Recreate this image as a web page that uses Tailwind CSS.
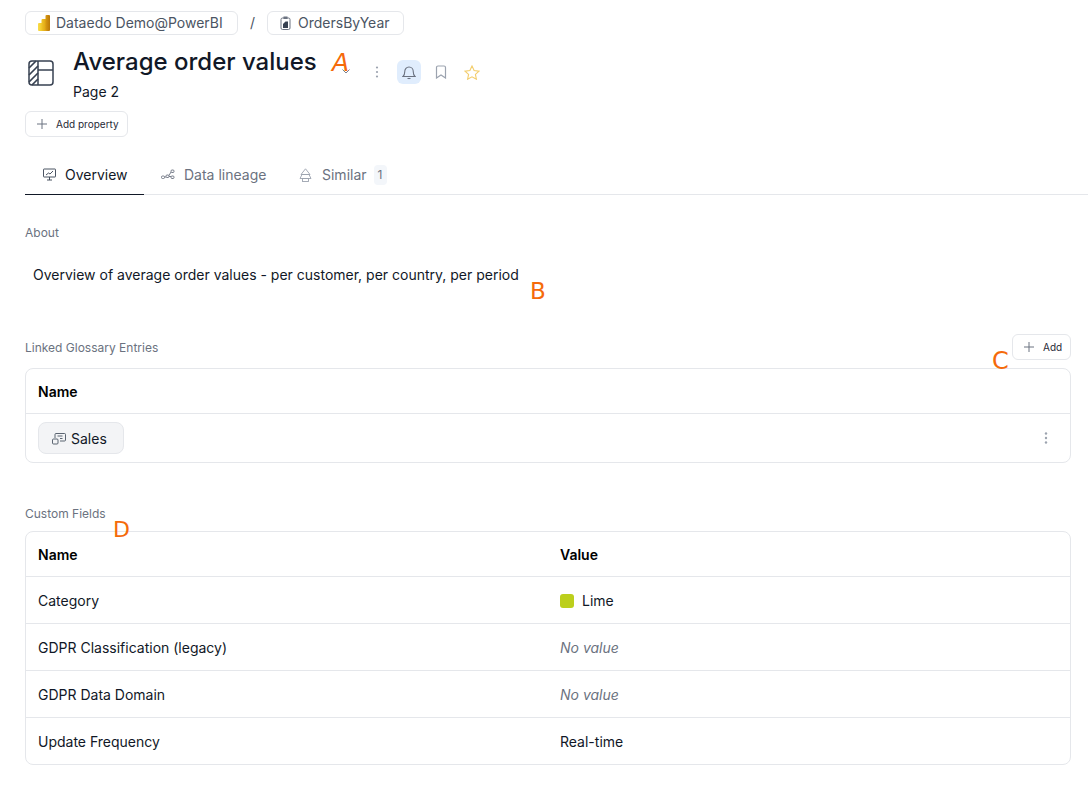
<!DOCTYPE html>
<html lang="en">
<head>
    <meta charset="UTF-8">
    <title>Average order values</title>
    <script src="https://cdn.jsdelivr.net/npm/@tailwindcss/browser@4"></script>
</head>
<body class="bg-white font-['Inter',sans-serif] text-[#111827] h-[798px] overflow-hidden relative">

    <!-- breadcrumb -->
    <div class="flex items-center pt-[11px] pl-[25px] h-[35px]">
        <div class="flex items-center h-6 w-[213px] pl-3 border border-[#e5e7eb] rounded-md text-sm text-[#4b5563]">
            <svg class="w-[12px] h-[16px] mr-[6px]" viewBox="0 0 12 16">
                <defs>
                    <linearGradient id="bi1" x1="0" y1="0" x2="1" y2="0"><stop offset="0" stop-color="#f8dc4a"/><stop offset="1" stop-color="#f2c21f"/></linearGradient>
                    <linearGradient id="bi2" x1="0" y1="0" x2="1" y2="0"><stop offset="0" stop-color="#f0c52a"/><stop offset="1" stop-color="#dc9f10"/></linearGradient>
                    <linearGradient id="bi3" x1="0" y1="0" x2="1" y2="0"><stop offset="0" stop-color="#d99a12"/><stop offset="1" stop-color="#b97708"/></linearGradient>
                </defs>
                <rect x="0" y="8" width="5" height="8" rx="1" fill="url(#bi1)"/><rect x="3.500" y="4" width="5" height="12" rx="1" fill="url(#bi2)"/><rect x="7.500" y="0" width="4.500" height="16" rx="1" fill="url(#bi3)"/>
            </svg>
            Dataedo Demo@PowerBI
        </div>
        <span class="w-[29px] text-center text-sm text-[#4b5563]">/</span>
        <div class="flex items-center h-6 w-[137px] pl-3 border border-[#e5e7eb] rounded-md text-sm text-[#4b5563]">
            <svg class="w-[11px] h-[14px] mr-[7px]" viewBox="0 0 11 14"><rect x="1" y="2" width="9" height="11.500" rx="1.500" fill="none" stroke="#6b7280"/><rect x="3.500" y="0.500" width="4" height="2.500" fill="#6b7280"/><path d="M3 12V8l2.500-2.500h2.500V12z" fill="#374151"/></svg>
            OrdersByYear
        </div>
    </div>

    <!-- title -->
    <div class="flex pl-[28px] mt-[10px] h-[67px]">
        <svg class="w-[26px] h-[26px] mt-[15px]" viewBox="0 0 26 26" fill="none" stroke="#374151" stroke-width="1.500">
            <rect x="1" y="1" width="24" height="24" rx="3"/>
            <path d="M10 1v24M10 10h15"/>
            <path d="M1 8l7-7M1 15L10 6M1 22L10 13M4 25l6-6" stroke-width="1.700"/>
        </svg>
        <div class="ml-[19px]">
            <div class="text-2xl font-medium leading-8 h-[32px] mt-[1px]">Average order values</div>
            <div class="text-sm leading-5 mt-[4px]">Page 2</div>
        </div>
        <div class="flex items-center h-6 mt-[15px] ml-[48px]">
            <svg class="w-6 h-6" viewBox="0 0 24 24" fill="#9ca3af"><circle cx="12" cy="7.500" r="1.100"/><circle cx="12" cy="12" r="1.100"/><circle cx="12" cy="16.500" r="1.100"/></svg>
            <div class="flex items-center justify-center w-6 h-6 ml-2 rounded-md bg-[#e0edfd]">
                <svg class="w-[14px] h-[15px]" viewBox="0 0 14 15" fill="none" stroke="#6b7280" stroke-width="1.100"><path d="M1 11.500c1.300-1 1.700-2.200 1.700-4.500 0-2.800 1.800-5 4.300-5s4.300 2.200 4.300 5c0 2.300.4 3.500 1.700 4.500z"/><path d="M5.500 13.500h3"/></svg>
            </div>
            <svg class="w-[12px] h-[14px] ml-[14px]" viewBox="0 0 12 14" fill="none" stroke="#9ca3af" stroke-width="1.200"><path d="M1.500 13V2.500a1.500 1.500 0 0 1 1.500-1.500h6a1.500 1.500 0 0 1 1.500 1.500V13L6 10z"/></svg>
            <svg class="w-[16px] h-[15px] ml-[17px]" viewBox="0 0 16 15" fill="none" stroke="#f3cd6b" stroke-width="1.100"><path d="M8 1l2.100 4.500 4.900.6-3.600 3.300 1 4.800L8 11.800l-4.400 2.400 1-4.800L1 6.100l4.900-.6z"/></svg>
        </div>
    </div>

    <!-- add property -->
    <div class="pl-[25px] mt-[-1px]">
        <div class="inline-flex items-center w-[103px] h-[26px] pl-[10px] border border-[#e5e7eb] rounded-md text-[10px] text-[#1f2937]">
            <svg class="w-3 h-3 mr-2" viewBox="0 0 12 12" stroke="#6b7280" stroke-width="1"><path d="M6 1v10M1 6h10"/></svg>
            Add property
        </div>
    </div>

    <!-- tabs -->
    <div class="flex mt-[18px] ml-[25px] h-[40px] border-b border-[#e5e7eb] text-sm">
        <div class="flex items-center w-[119px] pl-[18px] h-[40px] border-b-[1.500px] border-[#111827]">
            <svg class="w-[13px] h-[13px] mr-[9px]" viewBox="0 0 13 13" fill="none" stroke="#374151" stroke-width="0.900"><rect x="0.500" y="1" width="12" height="8" rx="0.500"/><path d="M6.500 9v3M4 12h5M3 7l2.500-2 1.500 1 3-3"/></svg>
            Overview
        </div>
        <div class="flex items-center w-[155px] pl-[17px] text-[#6b7280]">
            <svg class="w-[14px] h-[11px] mr-[9px]" viewBox="0 0 14 11" fill="none" stroke="#6b7280" stroke-width="0.900"><rect x="0.500" y="7" width="3" height="2.500" rx="1"/><rect x="5" y="6" width="3" height="2.500" rx="1"/><rect x="10" y="1" width="3" height="2.500" rx="1"/><rect x="10" y="7" width="3" height="2.500" rx="1"/><path d="M3.500 8H5M8 7.500h2M8 6.500L10 3"/></svg>
            Data lineage
        </div>
        <div class="flex items-center text-[#6b7280]">
            <svg class="w-[13px] h-[14px] mr-[10px]" viewBox="0 0 13 14" fill="none" stroke="#9ca3af" stroke-width="0.900"><path d="M6.500 .8L11 6.500H2zM1 10.500L3 6.500h7l2 4z"/><rect x="3.500" y="10.500" width="6" height="3"/></svg>
            Similar
            <span class="flex items-center justify-center w-[13px] h-5 ml-[7px] rounded bg-[#f3f6fa] text-xs">1</span>
        </div>
    </div>

    <!-- about -->
    <section class="px-[25px]">
        <div class="text-xs leading-4 text-[#6b7280] mt-[30px]">About</div>
        <p class="text-sm leading-5 pl-2 mt-[24px]">Overview of average order values - per customer, per country, per period</p>
    </section>

    <!-- linked glossary -->
    <section class="pl-[25px] pr-[17px]">
        <div class="flex items-center justify-between h-[26px] mt-[49px]">
            <span class="text-xs text-[#6b7280] mt-[1px]">Linked Glossary Entries</span>
            <div class="flex items-center w-[59px] h-[26px] pl-[10px] border border-[#e5e7eb] rounded-md text-[10px] text-[#1f2937]">
                <svg class="w-3 h-3 mr-2" viewBox="0 0 12 12" stroke="#6b7280" stroke-width="1"><path d="M6 1v10M1 6h10"/></svg>
                Add
            </div>
        </div>
        <div class="mt-2 border border-[#e5e7eb] rounded-lg text-sm">
            <div class="flex items-center h-[45px] px-3 pt-px font-semibold text-black border-b border-[#e5e7eb]">Name</div>
            <div class="flex items-center justify-between h-[48px] pl-3 pr-[18px]">
                <div class="flex items-center w-[86px] h-8 pl-[13px] pt-px bg-[#f3f4f6] border border-[#e5e7eb] rounded-lg">
                    <svg class="w-[14px] h-[12px] mr-[5px]" viewBox="0 0 14 12" fill="none" stroke="#4b5563" stroke-width="0.900"><path d="M3 5V1.500A1 1 0 0 1 4 .500h8.500a1 1 0 0 1 1 1V7a1 1 0 0 1-1 1H8M5.500 3h5M8 5.500h2.500"/><rect x="0.500" y="6" width="5.500" height="5" rx="1"/></svg>
                    Sales
                </div>
                <svg class="w-3 h-4" viewBox="0 0 12 16" fill="#9ca3af"><circle cx="6" cy="3.500" r="1.200"/><circle cx="6" cy="8" r="1.200"/><circle cx="6" cy="12.500" r="1.200"/></svg>
            </div>
        </div>
    </section>

    <!-- custom fields -->
    <section class="pl-[25px] pr-[17px]">
        <div class="text-xs leading-4 text-[#6b7280] mt-[43px]">Custom Fields</div>
        <div class="mt-[9px] border border-[#e5e7eb] rounded-lg text-sm">
            <div class="grid grid-cols-[522px_1fr] items-center h-[45px] px-3 pt-px font-semibold text-black border-b border-[#e5e7eb]">
                <span>Name</span><span>Value</span>
            </div>
            <div class="grid grid-cols-[522px_1fr] items-center h-[47px] px-3 pt-px border-b border-[#e5e7eb]">
                <span>Category</span>
                <span class="flex items-center"><span class="w-[14px] h-[14px] rounded-[3px] bg-[#bccf1c] mr-2"></span>Lime</span>
            </div>
            <div class="grid grid-cols-[522px_1fr] items-center h-[47px] px-3 pt-px border-b border-[#e5e7eb]">
                <span>GDPR Classification (legacy)</span>
                <span class="italic text-[#6b7280]">No value</span>
            </div>
            <div class="grid grid-cols-[522px_1fr] items-center h-[47px] px-3 pt-px border-b border-[#e5e7eb]">
                <span>GDPR Data Domain</span>
                <span class="italic text-[#6b7280]">No value</span>
            </div>
            <div class="grid grid-cols-[522px_1fr] items-center h-[46px] px-3 pt-px">
                <span>Update Frequency</span>
                <span>Real-time</span>
            </div>
        </div>
    </section>

    <!-- annotations on top of the screenshot -->
    <svg class="absolute left-[342px] top-[69px] w-[8px] h-[5px]" viewBox="0 0 8 5" fill="none" stroke="#6b7280" stroke-width="0.900"><path d="M.5.500L4 4l3.500-3.500"/></svg>
    <span class="absolute left-[332px] top-[49px] text-[25px] leading-7 italic text-[#f56a0a] font-['DejaVu_Sans',sans-serif]">A</span>
    <span class="absolute left-[530px] top-[277px] text-[23px] leading-7 text-[#f56a0a] font-['DejaVu_Sans',sans-serif]">B</span>
    <span class="absolute left-[992px] top-[347px] text-[24px] leading-7 text-[#f56a0a] font-['DejaVu_Sans',sans-serif]">C</span>
    <span class="absolute left-[113px] top-[516px] text-[22px] leading-7 text-[#f56a0a] font-['DejaVu_Sans',sans-serif]">D</span>
</body>
</html>
